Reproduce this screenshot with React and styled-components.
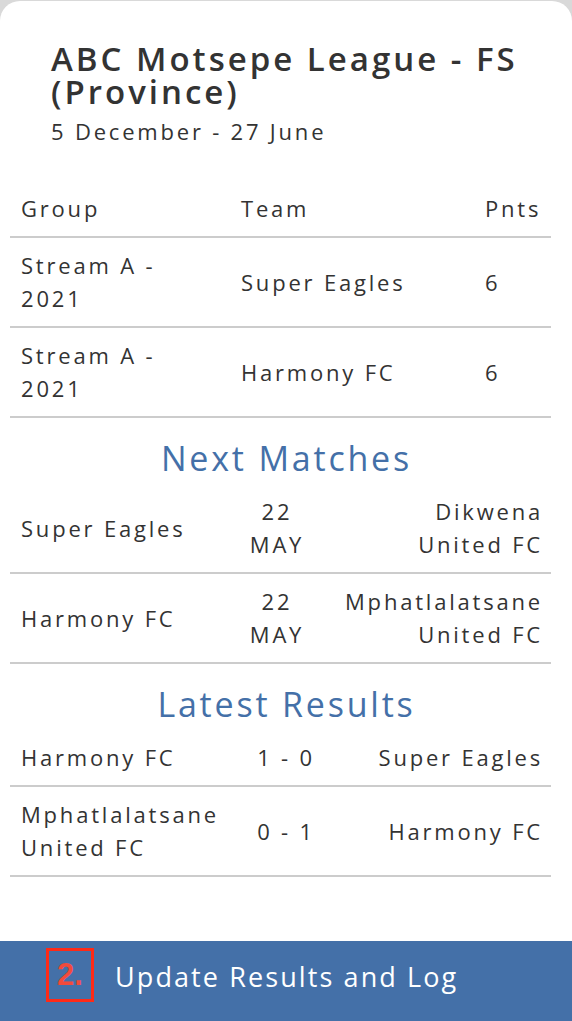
import React from 'react';
import styled, { createGlobalStyle } from 'styled-components';

const GlobalStyle = createGlobalStyle`
  html, body {
    margin: 0;
    padding: 0;
    background: #d9d9d9;
  }
  body {
    font-family: "Open Sans", "Noto Sans", sans-serif;
    color: #333;
  }
`;

const Page = styled.div`
  width: 572px;
  height: 1021px;
  padding-top: 1px;
  box-sizing: border-box;
  display: flex;
  flex-direction: column;
  overflow: hidden;
`;

const Card = styled.div`
  flex: 1;
  background: #fff;
  border-radius: 20px 20px 0 0;
  padding: 0 21px 0 10px;
  display: flex;
  flex-direction: column;
`;

const Heading = styled.div`
  padding: 41px 0 0 41px;
`;

const Title = styled.h1`
  margin: 0;
  font-size: 33px;
  line-height: 33px;
  font-weight: 600;
  letter-spacing: 3px;
  color: #333;
`;

const Dates = styled.div`
  font-size: 22px;
  line-height: 30px;
  letter-spacing: 2.8px;
  margin-top: 8px;
`;

const Table = styled.table`
  width: 541px;
  border-collapse: collapse;
  table-layout: fixed;
  font-size: 22px;
  line-height: 33px;
  letter-spacing: 2.8px;
  margin-top: ${(p) => p.$top || 0}px;
`;

const Th = styled.th`
  box-sizing: border-box;
  font-weight: 400;
  text-align: left;
  padding: 12px 11px 11px;
  border-bottom: 2px solid #cccccc;
  width: ${(p) => (p.$w ? `${p.$w}px` : 'auto')};
  white-space: nowrap;
`;

const Td = styled.td`
  box-sizing: border-box;
  padding: 11px ${(p) => (p.$align === 'right' ? 8 : 11)}px 11px 11px;
  border-bottom: 2px solid #cccccc;
  text-align: ${(p) => p.$align || 'left'};
  vertical-align: middle;
  width: ${(p) => (p.$w ? `${p.$w}px` : 'auto')};
  white-space: nowrap;
`;

const SectionTitle = styled.h2`
  margin: 0;
  padding: 19px 0 5px 6px;
  font-size: 34px;
  line-height: 42px;
  font-weight: 400;
  letter-spacing: 2.8px;
  text-align: center;
  color: #4470a8;
  width: 541px;
`;

const Footer = styled.div`
  height: 80px;
  background: #4470a8;
  display: flex;
  align-items: center;
  padding-left: 46px;
  gap: 21px;
`;

const StepBox = styled.div`
  width: 48px;
  height: 54px;
  box-sizing: border-box;
  border: 3px solid #ff2a17;
  display: flex;
  align-items: center;
  justify-content: center;
  margin-top: -12px;
  font-family: "Liberation Sans", Arial, sans-serif;
  font-weight: 700;
  font-size: 31px;
  color: #f24a3c;
`;

const FooterText = styled.div`
  color: #fff;
  font-size: 27px;
  letter-spacing: 2.1px;
  margin-top: -10px;
`;

const standings = [
  { group: ['Stream A -', '2021'], team: 'Super Eagles', pts: 6 },
  { group: ['Stream A -', '2021'], team: 'Harmony FC', pts: 6 },
];

const nextMatches = [
  { home: ['Super Eagles'], date: ['22', 'MAY'], away: ['Dikwena', 'United FC'] },
  { home: ['Harmony FC'], date: ['22', 'MAY'], away: ['Mphatlalatsane', 'United FC'] },
];

const results = [
  { home: ['Harmony FC'], score: ['1 - 0'], away: ['Super Eagles'] },
  { home: ['Mphatlalatsane', 'United FC'], score: ['0 - 1'], away: ['Harmony FC'] },
];

const Lines = ({ items }) =>
  items.map((t, i) => (
    <React.Fragment key={i}>
      {i > 0 && <br />}
      {t}
    </React.Fragment>
  ));

const MatchTable = ({ rows, mid, midWidth }) => (
  <Table>
    <tbody>
      {rows.map((r, i) => (
        <tr key={i}>
          <Td $w={221}><Lines items={r.home} /></Td>
          <Td $w={midWidth} $align="center"><Lines items={r[mid]} /></Td>
          <Td $align="right"><Lines items={r.away} /></Td>
        </tr>
      ))}
    </tbody>
  </Table>
);

export default function App() {
  return (
    <Page>
      <GlobalStyle />
      <Card>
        <Heading>
          <Title>ABC Motsepe League - FS (Province)</Title>
          <Dates>5 December - 27 June</Dates>
        </Heading>
        <Table $top={34}>
          <thead>
            <tr>
              <Th $w={220}>Group</Th>
              <Th $w={244}>Team</Th>
              <Th>Pnts</Th>
            </tr>
          </thead>
          <tbody>
            {standings.map((s, i) => (
              <tr key={i}>
                <Td><Lines items={s.group} /></Td>
                <Td>{s.team}</Td>
                <Td>{s.pts}</Td>
              </tr>
            ))}
          </tbody>
        </Table>
        <SectionTitle>Next Matches</SectionTitle>
        <MatchTable rows={nextMatches} mid="date" midWidth={92} />
        <SectionTitle>Latest Results</SectionTitle>
        <MatchTable rows={results} mid="score" midWidth={110} />
      </Card>
      <Footer>
        <StepBox>2.</StepBox>
        <FooterText>Update Results and Log</FooterText>
      </Footer>
    </Page>
  );
}
